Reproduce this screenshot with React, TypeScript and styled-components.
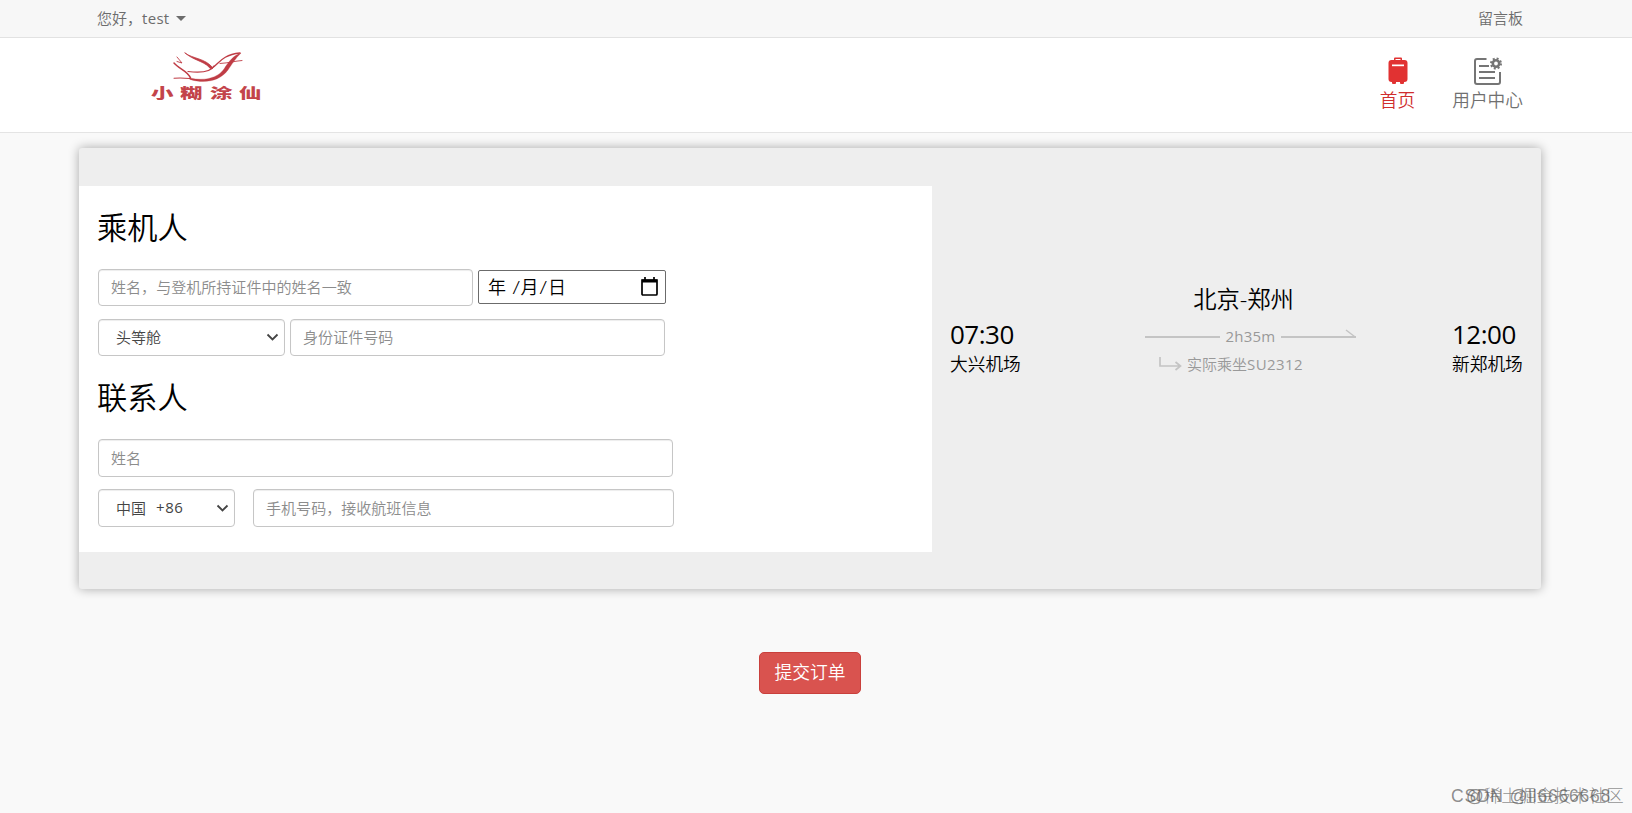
import React from 'react';
import styled, { createGlobalStyle } from 'styled-components';

const GlobalStyle = createGlobalStyle`
  * {
    box-sizing: border-box;
  }
  body {
    margin: 0;
    background-color: #f9f9f9;
    color: #000000;
    font-family: 'Open Sans', 'Noto Sans CJK SC', sans-serif;
    font-size: 15px;
    overflow: hidden;
  }
  input, select, button {
    font-family: inherit;
  }
`;
const Page = styled.div`
  height: 813px;
  display: flex;
  flex-direction: column;
`;
const TopBar = styled.div`
  height: 38px;
  padding: 0 109px 2px 97px;
  display: flex;
  justify-content: space-between;
  align-items: center;
  background-color: #f7f7f7;
  border-bottom: 1px solid #e2e2e2;
  color: #6c6c6c;
  font-weight: 350;
  line-height: 20px;
`;
const Greeting = styled.div`
  display: flex;
  align-items: center;
`;
const UserName = styled.span`
  font-weight: 400;
  letter-spacing: 0.3px;
`;
const Caret = styled.span`
  margin: 2px 0 0 7px;
  border-top: 5px solid #6c6c6c;
  border-left: 5px solid transparent;
  border-right: 5px solid transparent;
`;
const Header = styled.header`
  height: 95px;
  padding: 0 109px 0 151px;
  display: flex;
  justify-content: space-between;
  background-color: #ffffff;
  border-bottom: 1px solid #e4e4e4;
`;
const Logo = styled.div`
  width: 112px;
  padding-top: 13px;
`;
const LogoText = styled.div`
  display: flex;
  justify-content: space-between;
  margin-top: 1px;
  color: #c3444a;
  font-weight: 900;
  font-size: 15px;
  line-height: 16px;

  span {
    display: block;
    width: 24px;
    transform: scale(1.5, 0.92);
    transform-origin: 0 50%;
  }
`;
const Nav = styled.nav`
  display: flex;
  gap: 37px;
  padding-top: 19px;
`;
const NavItem = styled.div<{ $active?: boolean }>`
  display: flex;
  flex-direction: column;
  align-items: center;
  color: ${({ $active }) => ($active ? '#d02e2e' : '#707070')};
  font-weight: 350;
  font-size: 17.7px;
  line-height: 25px;

  svg {
    margin-bottom: 3px;
  }
`;
const Card = styled.main`
  width: 1462px;
  height: 441px;
  margin: 15px 0 0 79px;
  padding: 38px 0 37px;
  display: flex;
  background-color: #eeeeee;
  border-radius: 3px;
  box-shadow: 0 0 11px rgba(0, 0, 0, 0.33);
`;
const FormPanel = styled.section`
  flex: none;
  width: 853px;
  padding: 22px 19px 0;
  background-color: #ffffff;
`;
const Title = styled.h2<{ $top?: number }>`
  margin: ${({ $top = 0 }) => $top}px 0 21px -1px;
  font-weight: 350;
  font-size: 30.2px;
  line-height: 40px;
`;
const Row = styled.div<{ $gap?: number; $bottom?: number }>`
  display: flex;
  align-items: center;
  gap: ${({ $gap = 5 }) => $gap}px;
  margin-bottom: ${({ $bottom = 0 }) => $bottom}px;
`;
const Input = styled.input<{ $width: number; $height?: number }>`
  width: ${({ $width }) => $width}px;
  height: ${({ $height = 37 }) => $height}px;
  padding: 0 12px 1px;
  border: 1px solid #c6c6c6;
  border-radius: 4px;
  box-shadow: inset 0 1px 1px rgba(0, 0, 0, 0.075);
  background-color: #ffffff;
  font-weight: 350;
  font-size: 15.05px;

  &::placeholder {
    color: #8c8c8c;
    opacity: 1;
  }
`;
const SelectBox = styled.div<{ $width: number; $height?: number }>`
  width: ${({ $width }) => $width}px;
  height: ${({ $height = 37 }) => $height}px;
  padding: 0 5px 2px 17px;
  display: flex;
  justify-content: space-between;
  align-items: center;
  border: 1px solid #c6c6c6;
  border-radius: 4px;
  box-shadow: inset 0 1px 1px rgba(0, 0, 0, 0.075);
  color: #444444;
  font-weight: 350;

  svg {
    margin-top: 2px;
  }
`;
const CountryCode = styled.span`
  margin-left: 10px;
  margin-right: auto;
  font-weight: 400;
  letter-spacing: 0.6px;
`;
const DateBox = styled.div`
  width: 188px;
  height: 34px;
  margin-bottom: 1px;
  padding: 0 7px 1px 9px;
  display: flex;
  justify-content: space-between;
  align-items: center;
  border: 1px solid #6b6b6b;
  border-radius: 2px;
  font-weight: 350;
  font-size: 18px;
  line-height: 24px;
`;
const DateText = styled.span`
  display: flex;
  gap: 1.5px;
`;
const Slash = styled.span`
  font-size: 19px;
  transform: scaleX(1.15);
`;
const YearPart = styled.span`
  margin-right: 5px;
`;
const FlightPanel = styled.section`
  flex: 1;
  padding: 97px 18px 0 18px;
  display: flex;
  align-items: flex-start;
`;
const Airport = styled.div`
  width: 71px;
  padding-top: 33px;
  font-weight: 350;
  font-size: 17.7px;
  line-height: 26px;
  white-space: nowrap;
`;
const Time = styled.div`
  font-weight: 400;
  font-size: 26px;
  line-height: 36px;
  margin-bottom: -1px;
  letter-spacing: -0.5px;
`;
const Route = styled.div`
  width: 211px;
  margin: 0 96px 0 124px;
  color: #999999;
`;
const Cities = styled.div`
  padding-right: 14px;
  color: #000000;
  font-weight: 350;
  font-size: 23.3px;
  line-height: 32px;
  text-align: center;
`;
const Duration = styled.div`
  display: flex;
  align-items: center;
  justify-content: space-between;
  margin-top: 9px;
  line-height: 24px;
`;
const DurationText = styled.span`
  letter-spacing: 0.2px;
`;
const Line = styled.span`
  width: 75px;
  height: 2px;
  margin-top: 2px;
  background-color: #c4c4c4;
`;
const ArrowLine = styled(Line)`
  position: relative;

  svg {
    position: absolute;
    right: 0;
    bottom: 0;
  }
`;
const Actual = styled.div`
  display: flex;
  align-items: center;
  gap: 5px;
  padding-left: 14px;
  margin-top: 4px;
  font-weight: 350;
  line-height: 24px;
  white-space: nowrap;

  span {
    font-weight: 400;
    letter-spacing: 0.4px;
  }
`;
const Submit = styled.button`
  width: 102px;
  height: 42px;
  margin: 63px 0 0 759px;
  padding: 0 0 2px;
  border: 1px solid #c9403c;
  border-radius: 5px;
  background-color: #d9534f;
  color: #ffffff;
  font-weight: 350;
  font-size: 17.8px;
  line-height: 26px;
`;
const Watermark = styled.div<{ $left: number; $spacing?: number }>`
  position: absolute;
  left: ${({ $left }) => $left}px;
  bottom: 5px;
  color: rgba(80, 80, 80, 0.65);
  font-family: 'Liberation Sans', 'Noto Sans CJK SC', sans-serif;
  font-weight: 300;
  font-size: 17.5px;
  line-height: 24px;
  letter-spacing: ${({ $spacing = 0 }) => $spacing}px;
  white-space: nowrap;
`;

const Bird = styled.svg`
  display: block;
  margin-left: 20px;
`;

const LogoBird = () => (
  <Bird width="74" height="32" viewBox="0 0 74 32" fill="none" stroke="#bf3c45" strokeLinecap="round">
    <path d="M14 2C22 8 34 7 42 17C40 18 39 18 38 16C32 10 22 9 14 2Z" fill="#bf3c45" strokeWidth="0.8" />
    <path d="M41 17C48 13 50 4 69 2" strokeWidth="1.3" />
    <path d="M17 20.500C30 22 40 21 43 15" strokeWidth="1.2" />
    <path d="M3 27.300C9 26.500 14 27 19 27.500" strokeWidth="1.1" />
    <path d="M19 27C33 30.500 47 27 53 18C58 10 63 4 70 2C64 8 61 13 57 19C49 30 34 33 19 28.500Z" fill="#bf3c45" strokeWidth="0.3" />
    <path d="M3 12C8 18 17 20 19.500 27" strokeWidth="1.5" />
    <path d="M6 6L11 12L6 10.500" strokeWidth="0.9" />
    <path d="M49 12.500C58 12 64 10 71 9.500" strokeWidth="0.9" />
  </Bird>
);

const Suitcase = () => (
  <svg width="20" height="28" viewBox="0 0 20 28" fill="#e13232">
    <path fillRule="evenodd" d="M6 4V1.500Q6 .5 7 .5H13Q14 .5 14 1.500V4H12.500V2H7.500V4Z" />
    <rect x=".5" y="3" width="19" height="22" rx="3" />
    <rect x="4" y="24" width="4" height="3" rx="1" />
    <rect x="12" y="24" width="4" height="3" rx="1" />
    <rect x="4" y="7.500" width="12" height="1.700" fill="#fff" />
  </svg>
);

const UserCenter = () => (
  <svg width="30" height="28" viewBox="0 0 30 28" fill="none" stroke="#757575" strokeWidth="2">
    <path d="M13.500 2H4Q2 2 2 4V25Q2 27 4 27H25Q27 27 27 25V15M6 9H16M6 15H22M6 21H22" />
    <circle cx="23" cy="6.500" r="3.200" strokeWidth="2.600" />
    <circle cx="23" cy="6.500" r="5" strokeWidth="2" strokeDasharray="2 1.927" />
  </svg>
);

const Chevron = () => (
  <svg width="13" height="9" viewBox="0 0 13 9" fill="none" stroke="#444" strokeWidth="1.800">
    <path d="M1.500 1.500L6.500 6.500L11.500 1.500" />
  </svg>
);

const Calendar = () => (
  <svg width="17" height="19" viewBox="0 0 17 19" fill="none" stroke="#000" strokeWidth="1.700">
    <path d="M1 3H16V17Q16 18 15 18H2Q1 18 1 17ZM4 0V3M13 0V3" />
    <rect x="1" y="2.500" width="15" height="3" fill="#000" stroke="none" />
  </svg>
);

const ArrowHead = () => (
  <svg width="11" height="9" viewBox="0 0 11 9" fill="none" stroke="#c4c4c4" strokeWidth="1.500">
    <path d="M1 1L9.500 7.500" />
  </svg>
);

const TurnArrow = () => (
  <svg width="23" height="14" viewBox="0 0 23 14" fill="none" stroke="#c4c4c4" strokeWidth="1.700">
    <path d="M1 0V9H21M16.500 5L21.500 9L16.500 13" />
  </svg>
);

const App = () => {
  return (
    <Page>
      <GlobalStyle />
      <TopBar>
        <Greeting>
          您好，<UserName>test</UserName>
          <Caret />
        </Greeting>
        <span>留言板</span>
      </TopBar>
      <Header>
        <Logo>
          <LogoBird />
          <LogoText>
            {['小', '糊', '涂', '仙'].map((char) => (
              <span key={char}>{char}</span>
            ))}
          </LogoText>
        </Logo>
        <Nav>
          <NavItem $active>
            <Suitcase />
            首页
          </NavItem>
          <NavItem>
            <UserCenter />
            用户中心
          </NavItem>
        </Nav>
      </Header>
      <Card>
        <FormPanel>
          <Title>乘机人</Title>
          <Row $bottom={13}>
            <Input $width={375} placeholder="姓名，与登机所持证件中的姓名一致" />
            <DateBox>
              <DateText>
                <YearPart>年</YearPart>
                <Slash>/</Slash>月<Slash>/</Slash>日
              </DateText>
              <Calendar />
            </DateBox>
          </Row>
          <Row>
            <SelectBox $width={187}>
              头等舱
              <Chevron />
            </SelectBox>
            <Input $width={375} placeholder="身份证件号码" />
          </Row>
          <Title $top={22}>联系人</Title>
          <Row $bottom={12}>
            <Input $width={575} $height={38} placeholder="姓名" />
          </Row>
          <Row $gap={18}>
            <SelectBox $width={137} $height={38}>
              中国<CountryCode>+86</CountryCode>
              <Chevron />
            </SelectBox>
            <Input $width={421} $height={38} placeholder="手机号码，接收航班信息" />
          </Row>
        </FormPanel>
        <FlightPanel>
          <Airport>
            <Time>07:30</Time>
            大兴机场
          </Airport>
          <Route>
            <Cities>北京-郑州</Cities>
            <Duration>
              <Line />
              <DurationText>2h35m</DurationText>
              <ArrowLine>
                <ArrowHead />
              </ArrowLine>
            </Duration>
            <Actual>
              <TurnArrow />
              <div>
                实际乘坐<span>SU2312</span>
              </div>
            </Actual>
          </Route>
          <Airport>
            <Time>12:00</Time>
            新郑机场
          </Airport>
        </FlightPanel>
      </Card>
      <Submit>提交订单</Submit>
      <Watermark $left={1466}>@稀土掘金技术社区</Watermark>
      <Watermark $left={1451} $spacing={0.8}>CSDN @ll6666668</Watermark>
    </Page>
  );
};

export default App;
